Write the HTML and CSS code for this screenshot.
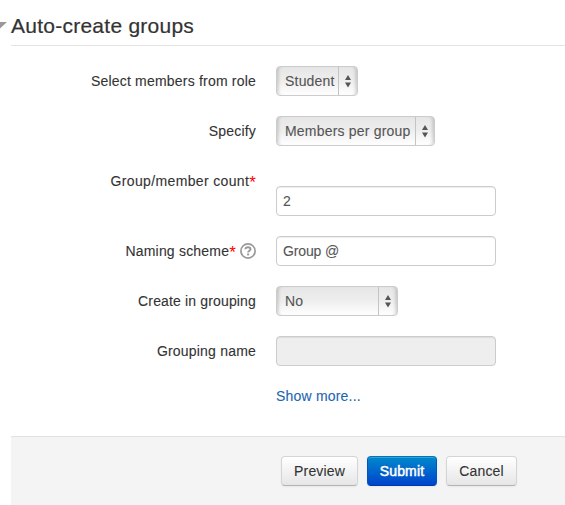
FILE: index.html
```html
<!DOCTYPE html>
<html lang="en">
<head>
<meta charset="utf-8">
<title>Auto-create groups</title>
<link rel="stylesheet" href="styles.css">
</head>
<body>
<form class="groups-form">
  <header class="legend">
    <svg class="collapse" width="14" height="7" viewBox="0 0 14 7"><path d="M0 0h14L7 6.5z" fill="#999"/></svg>
    <h1>Auto-create groups</h1>
  </header>
  <div class="rows">
    <div class="row">
      <div class="label">Select members from role</div>
      <div class="select select-role"><span class="value">Student</span><span class="arrows"><svg width="6" height="13" viewBox="0 0 6 13"><path d="M3 0l3 5H0zM3 12.5l3-5H0z"/></svg></span></div>
    </div>
    <div class="row">
      <div class="label">Specify</div>
      <div class="select select-specify"><span class="value">Members per group</span><span class="arrows"><svg width="6" height="13" viewBox="0 0 6 13"><path d="M3 0l3 5H0zM3 12.5l3-5H0z"/></svg></span></div>
    </div>
    <div class="row row-tall">
      <div class="label"><span class="count-label">Group/member count</span><span class="required">*</span></div>
      <div class="input"><span>2</span></div>
    </div>
    <div class="row">
      <div class="label"><span>Naming scheme</span><span class="required">*</span><svg class="help" width="16" height="16" viewBox="0 0 16 16"><circle cx="8" cy="8" r="7.1" fill="none" stroke="#999" stroke-width="1.7"/><path d="M5.4 6.3C5.5 4.7 6.6 4.2 8 4.2s2.5.7 2.5 2C10.5 7.7 8.1 7.7 8.1 9.5" fill="none" stroke="#999" stroke-width="1.9"/><path d="M7.1 10.5h2v1.9h-2z" fill="#999"/></svg></div>
      <div class="input"><span class="scheme-value">Group @</span></div>
    </div>
    <div class="row">
      <div class="label create-label">Create in grouping</div>
      <div class="select select-grouping"><span class="value">No</span><span class="arrows"><svg width="6" height="13" viewBox="0 0 6 13"><path d="M3 0l3 5H0zM3 12.5l3-5H0z"/></svg></span></div>
    </div>
    <div class="row">
      <div class="label">Grouping name</div>
      <div class="input disabled"></div>
    </div>
  </div>
  <a class="more">Show more...</a>
  <footer class="actions">
    <div class="btn btn-preview">Preview</div>
    <div class="btn btn-submit">Submit</div>
    <div class="btn btn-cancel">Cancel</div>
  </footer>
</form>
</body>
</html>
```
FILE: styles.css
```css
* { box-sizing: border-box; }
body {
  margin: 0;
  background: #fff;
  color: #333;
  font: 14px/20px "Liberation Sans", Arial, sans-serif;
  -webkit-text-stroke: 0.1px currentColor;
  overflow: hidden;
}
.groups-form { margin-left: 11px; height: 505px; display: flex; flex-direction: column; }
.legend { position: relative; height: 46px; padding-top: 6px; border-bottom: 1px solid #e5e5e5; }
.legend h1 { margin: 0; font-size: 21px; line-height: 40px; font-weight: 400; letter-spacing: 0.25px; white-space: nowrap; -webkit-text-stroke: 0.2px #333; }
.collapse { position: absolute; left: -18px; top: 22px; }
.rows { display: flex; flex-direction: column; gap: 20px; padding-top: 20px; }
.row { display: flex; gap: 20px; height: 30px; letter-spacing: 0.2px; }
.row-tall { height: 50px; }
.row-tall .input { margin-top: 20px; }
.label { width: 245px; height: 30px; display: flex; justify-content: flex-end; align-items: center; white-space: nowrap; }
.count-label { letter-spacing: 0.35px; }
.create-label { letter-spacing: 0.15px; }
.required { color: #f00; font-size: 17px; line-height: 14px; padding-top: 3px; -webkit-text-stroke: 0; }
.help { margin-left: 4px; }
.select, .input {
  height: 30px;
  border: 1px solid #ccc;
  border-radius: 4px;
  display: flex;
  align-items: center;
  color: #555;
  white-space: nowrap;
}
.input { width: 220px; padding: 0 6px; box-shadow: inset 0 1px 1px rgba(0, 0, 0, 0.075); }
.scheme-value { letter-spacing: -0.15px; }
.disabled { background: #eee; }
.select {
  background: linear-gradient(#e6e6e6, #eee 50%, #fff);
  box-shadow: inset 4px 0 3px -2px rgba(0, 0, 0, 0.14), inset -4px 0 3px -2px rgba(0, 0, 0, 0.14);
  padding-left: 8px;
}
.value { flex: 1; }
.arrows { width: 19px; height: 28px; border-left: 1px solid #c4c4c4; display: flex; align-items: center; justify-content: center; }
.arrows path { fill: #555; }
.select-role { width: 82px; }
.select-specify { width: 159px; }
.select-grouping { width: 122px; }
.more { margin: 20px 0 0 265px; height: 20px; color: #1c66b0; letter-spacing: 0.2px; }
.actions {
  margin-top: 30px;
  flex: 1;
  display: flex;
  gap: 9px;
  padding: 19px 0 0 270px;
  background: #f4f4f4;
  border-top: 1px solid #e1e1e1;
}
.btn {
  height: 30px;
  border: 1px solid #d5d5d5;
  border-bottom-color: #b3b3b3;
  border-radius: 4px;
  background: linear-gradient(#fff, #e6e6e6);
  box-shadow: inset 0 1px 0 rgba(255, 255, 255, 0.2), 0 1px 2px rgba(0, 0, 0, 0.05);
  display: flex;
  align-items: center;
  justify-content: center;
  letter-spacing: 0.15px;
}
.btn-preview { width: 77px; }
.btn-submit {
  width: 70px;
  color: #fff;
  border-color: #0077b8 #0055c0 #0039ac;
  background: linear-gradient(#08c, #04c);
  text-shadow: 0 -1px 0 rgba(0, 0, 0, 0.25);
  -webkit-text-stroke: 0.5px #fff;
}
.btn-cancel { width: 71px; }
```
